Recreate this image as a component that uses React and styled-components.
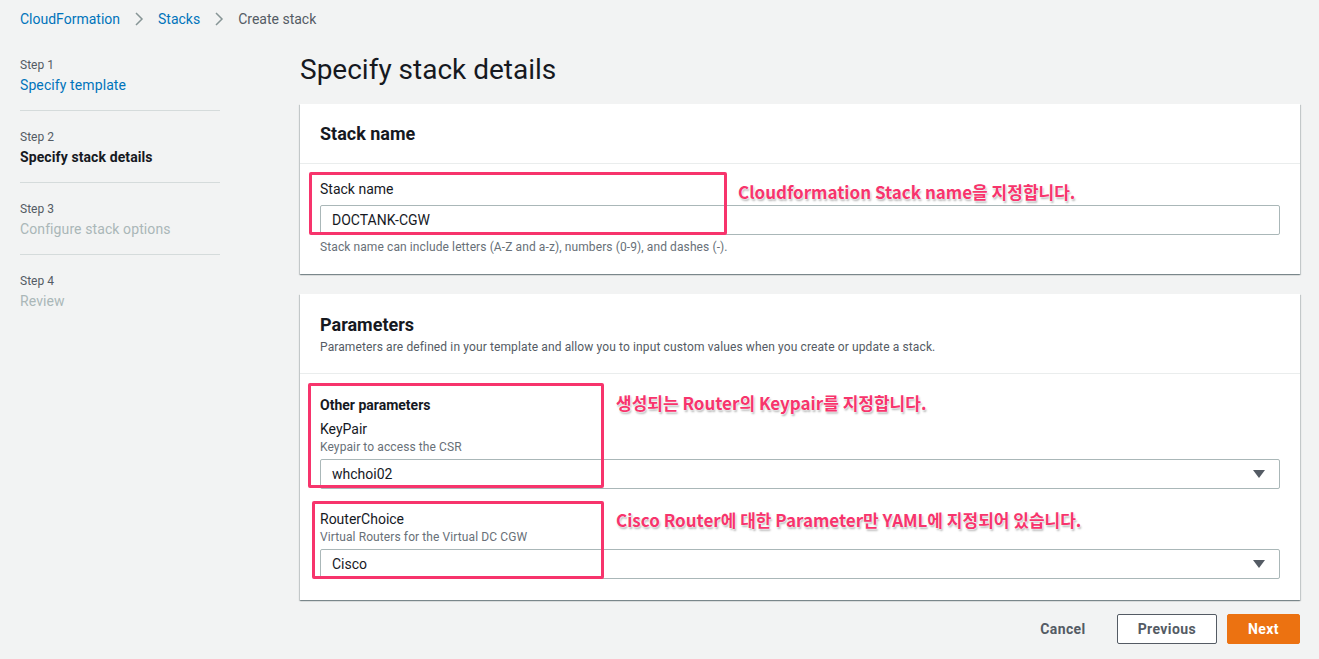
import styled, { createGlobalStyle } from "styled-components";

const GlobalStyle = createGlobalStyle`
    html, body {
        margin: 0;
        padding: 0;
        background: #f2f3f3;
        font-family: Roboto, "Liberation Sans", "Noto Sans CJK KR", sans-serif;
        color: #16191f;
    }
    * { box-sizing: border-box; }
`;

const Page = styled.div`
    min-height: 659px;
    padding: 9px 20px 0;
`;

const Breadcrumbs = styled.nav`
    display: flex;
    align-items: center;
    gap: 14px;
    height: 20px;
    font-size: 14px;
    line-height: 20px;
`;

const Crumb = styled.span`
    color: ${(props) => (props.current ? "#545b64" : "#0073bb")};
`;

const Layout = styled.div`
    display: grid;
    grid-template-columns: 200px 1000px;
    column-gap: 80px;
    margin-top: 10px;
`;

const Steps = styled.ul`
    list-style: none;
    margin: 0;
    padding: 0;
`;

const StepItem = styled.li`
    padding: 18px 0 15px;
    border-bottom: ${(props) => (props.last ? "none" : "1px solid #d5dbdb")};
`;

const StepLabel = styled.div`
    font-size: 12px;
    line-height: 16px;
    color: #545b64;
`;

const StepTitle = styled.div`
    margin-top: 2px;
    font-size: 14px;
    line-height: 20px;
    letter-spacing: 0.1px;
    font-weight: ${(props) => (props.state === "active" ? 700 : 400)};
    color: ${(props) =>
        props.state === "active" ? "#16191f" : props.state === "done" ? "#0073bb" : "#aab7b8"};
`;

const Main = styled.main`
    display: flex;
    flex-direction: column;
`;

const Title = styled.h1`
    margin: 13px 0 16px;
    font-size: 28px;
    line-height: 36px;
    font-weight: 400;
    color: #16191f;
`;

const Card = styled.section`
    background: #fff;
    box-shadow: 0 1px 1px 0 rgba(0, 28, 36, 0.3), 1px 1px 1px 0 rgba(0, 28, 36, 0.15),
        -1px 1px 1px 0 rgba(0, 28, 36, 0.15);
    margin-bottom: 20px;
`;

const CardHeader = styled.header`
    padding: ${(props) => props.pad};
    border-bottom: 1px solid #eaeded;
`;

const CardTitle = styled.h2`
    margin: 0;
    font-size: 18px;
    line-height: 22px;
    font-weight: 700;
`;

const CardDesc = styled.p`
    margin: 3px 0 0;
    font-size: 12px;
    line-height: 16px;
    letter-spacing: 0.12px;
    color: #545b64;
`;

const CardBody = styled.div`
    padding: ${(props) => props.pad};
`;

const Field = styled.div`
    position: relative;
    margin-top: ${(props) => props.top || 0}px;
`;

const GroupTitle = styled.div`
    font-size: 14px;
    line-height: 20px;
    font-weight: 700;
    margin-bottom: 4px;
`;

const Label = styled.div`
    font-size: 14px;
    line-height: 20px;
    color: #16191f;
`;

const Desc = styled.div`
    font-size: 12px;
    line-height: 16px;
    letter-spacing: 0.1px;
    color: #687078;
`;

const Input = styled.div`
    margin-top: ${(props) => props.gap}px;
    height: 30px;
    padding: 0 11px;
    display: flex;
    align-items: center;
    justify-content: space-between;
    border: 1px solid #aab7b8;
    border-radius: 2px;
    background: #fff;
    font-size: 14px;
    color: #16191f;
`;

const Caret = styled.span`
    width: 0;
    height: 0;
    margin-right: 3px;
    border-left: 6px solid transparent;
    border-right: 6px solid transparent;
    border-top: 8px solid #545b64;
`;

const Hint = styled.div`
    margin-top: 4px;
    font-size: 12px;
    line-height: 16px;
    letter-spacing: 0.1px;
    color: #687078;
`;

const Highlight = styled.div`
    position: absolute;
    border: 3px solid #f7346c;
    border-radius: 2px;
    pointer-events: none;
`;

const Note = styled.div`
    position: absolute;
    white-space: nowrap;
    font-family: "Noto Sans CJK KR", sans-serif;
    font-size: 17px;
    line-height: 22px;
    font-weight: 700;
    color: #f7346c;
    text-shadow: 0 0 2px #fff, 0 0 2px #fff, 1px 2px 2px rgba(0, 0, 0, 0.3);
`;

const Actions = styled.div`
    display: flex;
    justify-content: flex-end;
    gap: 10px;
    margin-top: -6px;
`;

const Button = styled.button`
    height: 30px;
    padding: 0 20px;
    border-radius: 2px;
    font-family: inherit;
    font-size: 14px;
    font-weight: 700;
    letter-spacing: 0.4px;
    cursor: pointer;
    border: 1px solid
        ${(props) => (props.variant === "primary" ? "#ec7211" : props.variant === "normal" ? "#545b64" : "transparent")};
    background: ${(props) => (props.variant === "primary" ? "#ec7211" : props.variant === "normal" ? "#fff" : "transparent")};
    color: ${(props) => (props.variant === "primary" ? "#fff" : "#545b64")};
`;

const Chevron = () => (
    <svg width="10" height="14" viewBox="0 0 10 14">
        <path d="M2 1l6 6-6 6" fill="none" stroke="#879596" strokeWidth="1.5" />
    </svg>
);

const steps = [
    { label: "Step 1", title: "Specify template", state: "done" },
    { label: "Step 2", title: "Specify stack details", state: "active" },
    { label: "Step 3", title: "Configure stack options", state: "todo" },
    { label: "Step 4", title: "Review", state: "todo" },
];

export default function App() {
    return (
        <Page>
            <GlobalStyle />
            <Breadcrumbs>
                <Crumb>CloudFormation</Crumb>
                <Chevron />
                <Crumb>Stacks</Crumb>
                <Chevron />
                <Crumb current>Create stack</Crumb>
            </Breadcrumbs>
            <Layout>
                <Steps>
                    {steps.map((s, i) => (
                        <StepItem key={s.label} last={i === steps.length - 1}>
                            <StepLabel>{s.label}</StepLabel>
                            <StepTitle state={s.state}>{s.title}</StepTitle>
                        </StepItem>
                    ))}
                </Steps>
                <Main>
                    <Title>Specify stack details</Title>

                    <Card>
                        <CardHeader pad="19px 20px 18px">
                            <CardTitle>Stack name</CardTitle>
                        </CardHeader>
                        <CardBody pad="15px 20px 19px">
                            <Field>
                                <Label>Stack name</Label>
                                <Input gap={6}>DOCTANK-CGW</Input>
                                <Highlight style={{ left: -11, top: -7, width: 418, height: 63 }} />
                                <Note style={{ left: 418, top: 2 }}>Cloudformation Stack name을 지정합니다.</Note>
                            </Field>
                            <Hint>Stack name can include letters (A-Z and a-z), numbers (0-9), and dashes (-).</Hint>
                        </CardBody>
                    </Card>

                    <Card>
                        <CardHeader pad="20px 20px 18px">
                            <CardTitle>Parameters</CardTitle>
                            <CardDesc>
                                Parameters are defined in your template and allow you to input custom values when you create or update a stack.
                            </CardDesc>
                        </CardHeader>
                        <CardBody pad="21px 20px 21px">
                            <Field>
                                <GroupTitle>Other parameters</GroupTitle>
                                <Label>KeyPair</Label>
                                <Desc>Keypair to access the CSR</Desc>
                                <Input gap={4}>
                                    whchoi02
                                    <Caret />
                                </Input>
                                <Highlight style={{ left: -12, top: -12, width: 296, height: 105 }} />
                                <Note style={{ left: 296, top: -3 }}>생성되는 Router의 Keypair를 지정합니다.</Note>
                            </Field>
                            <Field top={20}>
                                <Label>RouterChoice</Label>
                                <Desc>Virtual Routers for the Virtual DC CGW</Desc>
                                <Input gap={4}>
                                    Cisco
                                    <Caret />
                                </Input>
                                <Highlight style={{ left: -8, top: -8, width: 292, height: 78 }} />
                                <Note style={{ left: 296, top: 0 }}>Cisco Router에 대한 Parameter만 YAML에 지정되어 있습니다.</Note>
                            </Field>
                        </CardBody>
                    </Card>

                    <Actions>
                        <Button>Cancel</Button>
                        <Button variant="normal">Previous</Button>
                        <Button variant="primary">Next</Button>
                    </Actions>
                </Main>
            </Layout>
        </Page>
    );
}
